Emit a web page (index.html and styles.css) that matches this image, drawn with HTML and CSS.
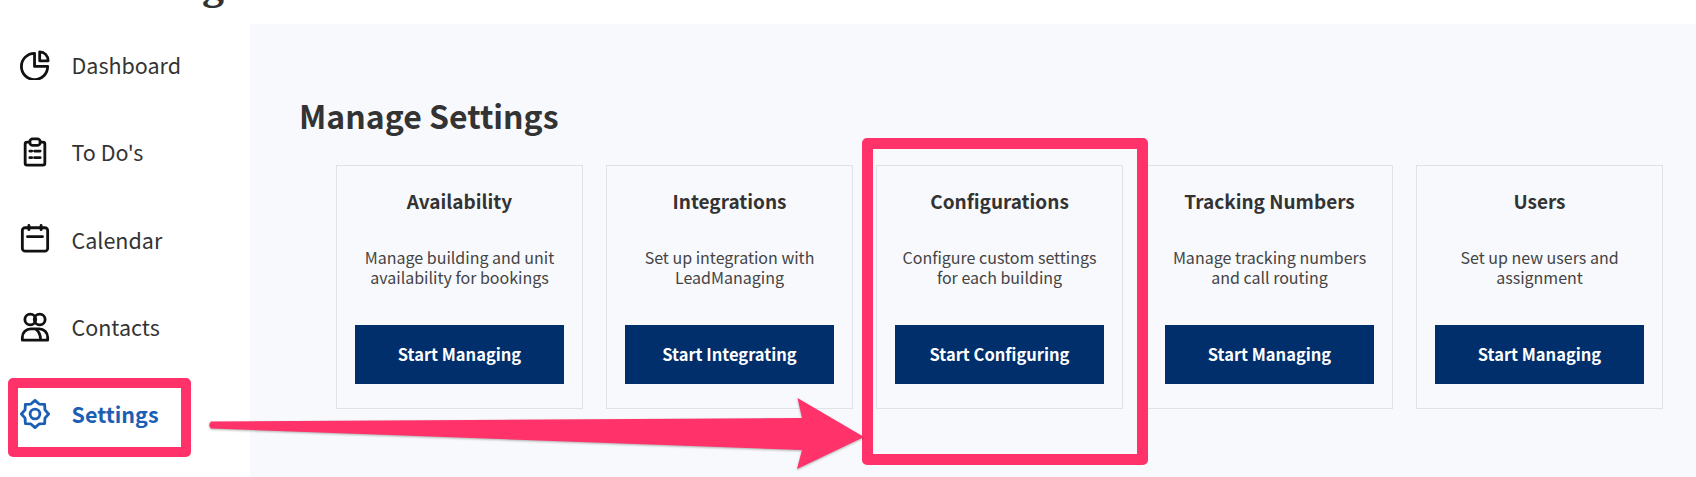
FILE: index.html
```html
<!DOCTYPE html>
<html lang="en">
<head>
<meta charset="utf-8">
<title>Manage Settings</title>
<link rel="stylesheet" href="styles.css">
</head>
<body>
<div class="topbar"><span class="brand">Settings</span></div>
<div class="shell">
  <nav class="sidebar">
    <a class="nav-item">
      <svg class="nav-icon" viewBox="0 0 32 32"><path d="M15.500 3.500A14 14 0 1 0 29.500 17.500H15.500Z"/><path d="M21 2V11.500H30C30 6 26 2 21 2Z"/></svg>
      <span>Dashboard</span>
    </a>
    <a class="nav-item">
      <svg class="nav-icon" viewBox="0 0 32 32"><path d="M10.500 5.500H7.500a2 2 0 0 0-2 2V28a2 2 0 0 0 2 2h17a2 2 0 0 0 2-2V7.500a2 2 0 0 0-2-2h-3"/><rect x="10.500" y="2" width="11" height="7" rx="3"/><path d="M10.500 15h2M15.500 15h6M10.500 22h2M15.500 22h6"/></svg>
      <span>To Do's</span>
    </a>
    <a class="nav-item">
      <svg class="nav-icon" viewBox="0 0 32 32"><rect x="2.500" y="4" width="27" height="25" rx="3"/><path d="M9.500 1.500v4.500M22.500 1.500v4.500M8 13.500h16"/></svg>
      <span>Calendar</span>
    </a>
    <a class="nav-item">
      <svg class="nav-icon" viewBox="0 0 32 32"><circle cx="11" cy="8" r="5.800"/><circle cx="21" cy="8" r="5.800"/><path d="M2.500 30v-3a9 9 0 0 1 9-9h9a9 9 0 0 1 9 9v3ZM16.500 18c3.500 2.500 5.500 6.500 5.500 12"/></svg>
      <span>Contacts</span>
    </a>
    <a class="nav-item nav-active">
      <svg class="nav-icon" viewBox="0 0 32 32"><path d="M16 1.500 20.400 5.400 26.250 5.750 26.600 11.600 30.500 16 26.600 20.400 26.250 26.250 20.400 26.600 16 30.500 11.600 26.600 5.750 26.250 5.400 20.400 1.500 16 5.400 11.600 5.750 5.750 11.600 5.400Z"/><circle cx="16" cy="16" r="5.200"/></svg>
      <span>Settings</span>
    </a>
  </nav>
  <main class="panel">
    <h1 class="panel-title">Manage Settings</h1>
    <div class="cards">
      <section class="card">
        <h2 class="card-title">Availability</h2>
        <p class="card-text">Manage building and unit<br>availability for bookings</p>
        <a class="card-button">Start Managing</a>
      </section>
      <section class="card">
        <h2 class="card-title">Integrations</h2>
        <p class="card-text">Set up integration with<br>LeadManaging</p>
        <a class="card-button">Start Integrating</a>
      </section>
      <section class="card">
        <h2 class="card-title">Configurations</h2>
        <p class="card-text">Configure custom settings<br>for each building</p>
        <a class="card-button">Start Configuring</a>
      </section>
      <section class="card">
        <h2 class="card-title">Tracking Numbers</h2>
        <p class="card-text">Manage tracking numbers<br>and call routing</p>
        <a class="card-button">Start Managing</a>
      </section>
      <section class="card">
        <h2 class="card-title">Users</h2>
        <p class="card-text">Set up new users and<br>assignment</p>
        <a class="card-button">Start Managing</a>
      </section>
    </div>
  </main>
</div>
<div class="mark mark-settings"></div>
<div class="mark mark-card"></div>
<svg class="arrow" viewBox="0 0 1696 477" aria-hidden="true">
  <path class="arrow-shape" d="M211 421.500 L802 418 L797.500 398 L864 437 L797 469 L802 450 L211 428.500 Q207.500 425 211 421.500Z"/>
</svg>
</body>
</html>
```
FILE: styles.css
```css
* { box-sizing: border-box; }
html, body { margin: 0; padding: 0; }
body {
  width: 1696px;
  height: 477px;
  overflow: hidden;
  position: relative;
  background: #fff;
  font-family: "Noto Sans CJK SC", "Noto Sans", sans-serif;
  color: #333;
}
.topbar {
  height: 24px;
  overflow: hidden;
  position: relative;
}
.brand {
  display: block;
  margin: -40px 0 0 92px;
  font-family: "Liberation Serif", serif;
  font-weight: 700;
  font-size: 44px;
  line-height: 50px;
  color: #333;
}
.shell {
  display: flex;
  height: 453px;
}
.sidebar {
  width: 250px;
  flex: none;
  display: flex;
  flex-direction: column;
  padding: 0 0 0 20px;
}
.nav-item {
  display: flex;
  align-items: center;
  gap: 21.500px;
  height: 87.300px;
  font-size: 21.500px;
  color: #333;
}
.nav-item:first-child { margin-top: -3px; }
.nav-icon {
  width: 30px;
  height: 30px;
  flex: none;
  fill: none;
  stroke: #111;
  stroke-width: 3;
  stroke-linecap: round;
  stroke-linejoin: round;
}
.nav-active { color: #1b5fb5; font-weight: 700; }
.nav-active .nav-icon { stroke: #1b5fb5; }
.panel {
  flex: 1;
  background: #f8f9fc;
  padding: 69px 0 0 49px;
}
.panel-title {
  margin: 0;
  font-size: 32px;
  line-height: 44px;
  font-weight: 700;
  color: #333;
}
.cards {
  display: flex;
  gap: 23px;
  margin: 28px 0 0 37px;
}
.card {
  width: 247px;
  height: 244px;
  border: 1px solid #dfe2e8;
  padding: 22px 18px 0;
  display: flex;
  flex-direction: column;
  align-items: stretch;
  text-align: center;
}
.card-title {
  margin: 0;
  font-size: 19px;
  line-height: 26px;
  font-weight: 700;
  color: #333;
}
.card-text {
  margin: 34px 0 0;
  font-size: 16px;
  line-height: 19.500px;
  color: #444;
}
.card-button {
  margin-top: 38px;
  height: 59px;
  padding-bottom: 2px;
  display: flex;
  align-items: center;
  justify-content: center;
  background: #002f6c;
  color: #fff;
  font-size: 16.500px;
  font-weight: 700;
}
.mark {
  position: absolute;
  border: 10px solid #ff3269;
  border-radius: 5px;
}
.mark-settings { left: 8px; top: 378px; width: 183px; height: 79px; }
.mark-card { left: 862px; top: 138px; width: 286px; height: 327px; border-width: 11px; }
.arrow {
  position: absolute;
  left: 0;
  top: 0;
  width: 1696px;
  height: 477px;
  pointer-events: none;
}
.arrow-shape {
  fill: #ff3269;
  filter: drop-shadow(0 1px 1px rgba(0, 0, 0, .3));
}
```
